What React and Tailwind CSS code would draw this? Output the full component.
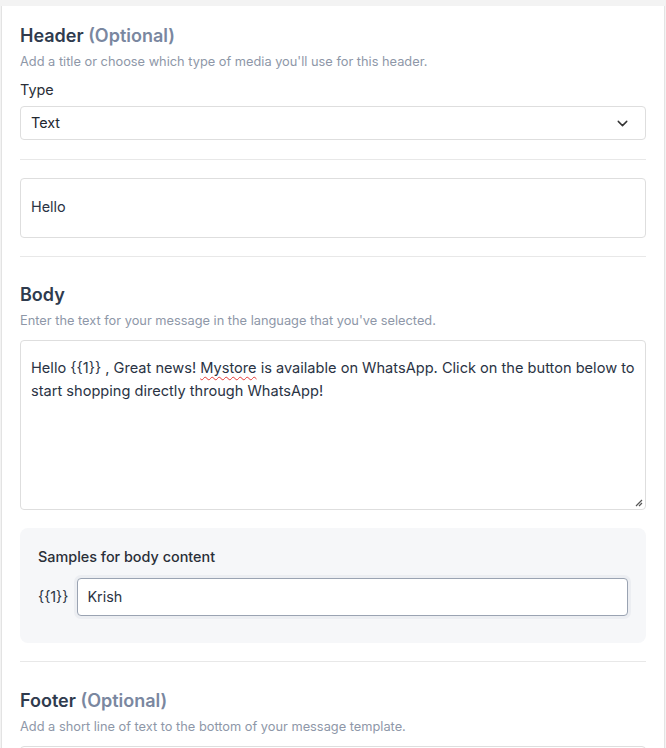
import { ChevronDown } from "lucide-react";

function SectionTitle({ title, optional }) {
    return (
        <h2 className="text-[18px] leading-[28px] font-semibold text-[#2f3b4e]">
            {title}
            {optional && <span className="text-[#7a87a0] font-semibold"> (Optional)</span>}
        </h2>
    );
}

function Hint({ children }) {
    return <p className="text-[12.8px] leading-[16px] text-[#8e97a8] mt-[4px]">{children}</p>;
}

export default function App() {
    return (
        <div className="min-h-screen bg-[#f3f3f3] pt-[6px] font-['Inter',sans-serif]">
            <div className="mx-px bg-white border-x border-[#e3e3e3] px-[18px] pt-[16px] pb-10">
                {/* Header */}
                <SectionTitle title="Header" optional />
                <Hint>Add a title or choose which type of media you'll use for this header.</Hint>
                <div className="mt-[10px] text-[14.4px] leading-[20px] text-[#2a2f38]">Type</div>
                <div className="mt-[6px] h-[34px] flex items-center justify-between border border-[#dedede] rounded-[4px] pl-[10px] pr-[14px]">
                    <span className="text-[14.4px] text-[#22272f] pb-[1px]">Text</span>
                    <ChevronDown size={17} strokeWidth={2} className="text-[#333]" />
                </div>

                <div className="mt-[19px] border-t border-[#e8e8e8]" />

                <div className="mt-[18px] h-[60px] flex items-center border border-[#dedede] rounded-[4px] px-[10px] pb-[3px] text-[14.4px] text-[#2a3344]">
                    Hello
                </div>

                <div className="mt-[18px] border-t border-[#e8e8e8]" />

                {/* Body */}
                <div className="mt-[24px]">
                    <SectionTitle title="Body" />
                </div>
                <Hint>Enter the text for your message in the language that you've selected.</Hint>
                <div className="relative mt-[11px] h-[170px] border border-[#dedede] rounded-[4px] px-[10px] pt-[16px] text-[14.6px] leading-[23px] text-[#2a3344]">
                    Hello {"{{1}}"} , Great news!{" "}
                    <span className="underline decoration-wavy decoration-[#e53935] decoration-1 underline-offset-[3px]">Mystore</span>{" "}
                    is available on WhatsApp. Click on the button below to start shopping directly through WhatsApp!
                    <svg className="absolute right-[2px] bottom-[2px]" width="9" height="9" viewBox="0 0 9 9">
                        <path d="M8 2 L2 8 M8 5 L5 8" stroke="#555" strokeWidth="1.2" />
                    </svg>
                </div>

                <div className="mt-[18px] bg-[#f6f7f9] rounded-[8px] px-[18px] pt-[19px] pb-[27px]">
                    <div className="text-[14.4px] leading-[20px] font-medium text-[#2a2f38]">Samples for body content</div>
                    <div className="mt-[11px] flex items-center gap-[9px]">
                        <span className="text-[14.4px] text-[#2a3344]">{"{{1}}"}</span>
                        <div className="flex-1 h-[38px] flex items-center border border-[#9aa3b2] rounded-[4px] bg-white px-[9px] text-[14.4px] text-[#2a3344] ring-[3px] ring-[#eceef2]">
                            Krish
                        </div>
                    </div>
                </div>

                <div className="mt-[18px] border-t border-[#e8e8e8]" />

                {/* Footer */}
                <div className="mt-[25px]">
                    <SectionTitle title="Footer" optional />
                </div>
                <Hint>Add a short line of text to the bottom of your message template.</Hint>
                <div className="mt-[11px] h-[60px] border border-[#dedede] rounded-[4px]" />
            </div>
        </div>
    );
}
